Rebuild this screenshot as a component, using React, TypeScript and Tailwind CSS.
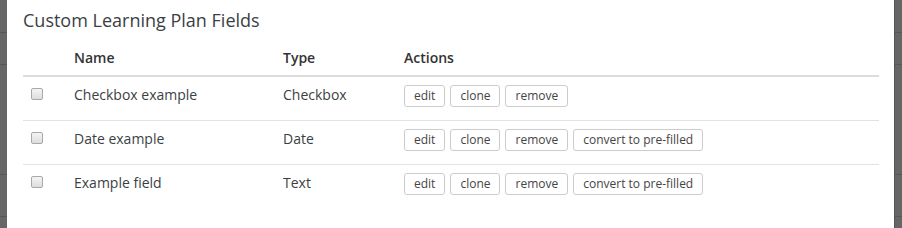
import React from 'react';

type Field = {
  name: string;
  type: string;
  convertible: boolean;
};

const fields: Field[] = [
  { name: 'Checkbox example', type: 'Checkbox', convertible: false },
  { name: 'Date example', type: 'Date', convertible: true },
  { name: 'Example field', type: 'Text', convertible: true },
];

function ActionButton({ children }: { children: React.ReactNode }) {
  return (
    <button
      type="button"
      className="h-[22px] rounded-[3px] border border-[#cccccc] bg-white px-[9px] text-[12px] leading-[20px] text-[#444]"
    >
      {children}
    </button>
  );
}

function Backdrop({ side }: { side: 'left' | 'right' }) {
  return (
    <div
      className={
        side === 'left'
          ? 'flex w-[7px] shrink-0 flex-col bg-[#666666]'
          : 'flex w-[8px] shrink-0 flex-col border-l border-[#555] bg-[#666666]'
      }
    >
      {/* rows of the page behind the modal */}
      <div className="h-[33px] border-b border-[#575757]" />
      <div className="h-[32px] border-b border-[#575757]" />
      <div className="h-[110px] border-b border-[#575757]" />
      <div className="h-[42px] border-b border-[#575757]" />
    </div>
  );
}

export default function App() {
  return (
    <div
      className="flex h-[228px] w-[902px] overflow-hidden bg-[#666]"
      style={{ fontFamily: '"Open Sans", "Liberation Sans", sans-serif' }}
    >
      <Backdrop side="left" />

      <div className="flex-1 bg-white pl-[16px] pr-[15px] pt-[8px]">
        <h2 className="text-[18px] leading-[24px] text-[#3a3f44]">Custom Learning Plan Fields</h2>

        <div className="mt-[10px]">
          {/* Header */}
          <div className="grid h-[35px] grid-cols-[43px_209px_121px_1fr] items-end border-b-2 border-[#dddddd] pb-[7px] text-[14px] font-semibold leading-[20px] text-[#333]">
            <div />
            <div className="px-2">Name</div>
            <div className="px-2">Type</div>
            <div className="px-2">Actions</div>
          </div>

          {fields.map((f, i) => (
            <div
              key={f.name}
              className={`grid h-[44px] grid-cols-[43px_209px_121px_1fr] items-start pt-[8px] text-[14px] leading-[20px] text-[#3a3f44] ${
                i < fields.length - 1 ? 'border-b border-[#e2e2e2]' : ''
              }`}
            >
              <div className="px-2 pt-[3px]">
                <span className="block h-[12px] w-[12px] rounded-[2px] border border-[#a9a9a9] bg-gradient-to-b from-[#f4f4f4] to-[#dedede]" />
              </div>
              <div className="px-2">{f.name}</div>
              <div className="px-2">{f.type}</div>
              <div className="flex gap-[5px] px-2">
                <ActionButton>edit</ActionButton>
                <ActionButton>clone</ActionButton>
                <ActionButton>remove</ActionButton>
                {f.convertible && <ActionButton>convert to pre-filled</ActionButton>}
              </div>
            </div>
          ))}
        </div>
      </div>

      <Backdrop side="right" />
    </div>
  );
}
